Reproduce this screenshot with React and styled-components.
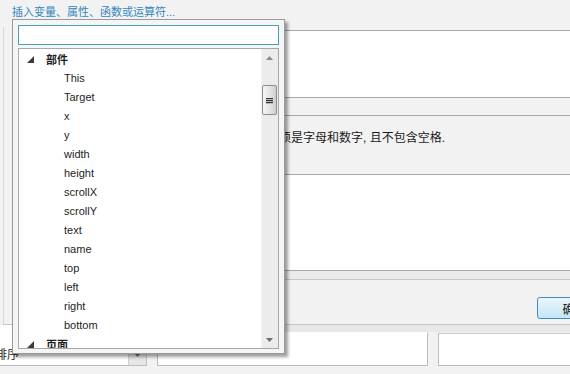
import React from 'react';
import styled, { createGlobalStyle } from 'styled-components';

const GlobalStyle = createGlobalStyle`
    html, body {
        margin: 0;
        padding: 0;
        background: #f2f2f2;
    }
    body {
        font-family: "Liberation Sans", "Noto Sans CJK SC", sans-serif;
    }
`;

const cjk = `"Liberation Sans", "Noto Sans CJK SC", sans-serif`;

const Screen = styled.div`
    position: relative;
    width: 570px;
    height: 374px;
    overflow: hidden;
    background: #f2f2f2;
    display: flex;
    flex-direction: column;
`;

const LinkBar = styled.div`
    height: 27px;
    box-sizing: border-box;
    padding: 5px 0 0 12px;
    font-family: ${cjk};
    font-size: 11px;
    line-height: 14px;
    color: #3388bf;
`;

const MainPanel = styled.div`
    margin-left: 3px;
    height: 298px;
    box-sizing: border-box;
    padding: 3px 0 0 10px;
    border-left: 1px solid #d8d8d8;
    border-bottom: 1px solid #c6c6c6;
    display: flex;
    flex-direction: column;
`;

const WhiteBox = styled.div`
    height: ${(p) => p.$h}px;
    box-sizing: border-box;
    background: #fff;
    border-top: 1px solid #a8a8a8;
    border-bottom: 1px solid #a8a8a8;
    margin-bottom: ${(p) => p.$gap || 0}px;
`;

const HintGroup = styled.div`
    height: 59px;
    box-sizing: border-box;
    border-top: 1px solid #a8a8a8;
    padding: 14px 0 0 229px;
    font-family: ${cjk};
    font-size: 12px;
    line-height: 16px;
    color: #1a1a1a;
    white-space: nowrap;
`;

const Divider = styled.div`
    height: 8px;
    background: #ebebeb;
`;

const Footer = styled.div`
    flex: 1;
    border-top: 1px solid #c8c8c8;
    display: flex;
    justify-content: flex-end;
    align-items: flex-start;
    padding-top: 17px;
`;

const PrimaryButton = styled.button`
    width: 75px;
    height: 22px;
    margin-right: -42px;
    border: 1px solid #3f8fbf;
    border-radius: 3px;
    background: linear-gradient(#eaf6fd, #c4e5f7);
    font-family: ${cjk};
    font-size: 12px;
    color: #111;
    padding: 0;
`;

const BottomRow = styled.div`
    height: 41px;
    display: flex;
    gap: 10px;
    background: linear-gradient(#e8e8e8 0 7px, #f2f2f2 7px);
`;

const ComboCell = styled.div`
    width: 147px;
    box-sizing: border-box;
    background: #fff;
    border-right: 1px solid #c4c4c4;
    border-bottom: 1px solid #bdbdbd;
    display: flex;
    align-items: flex-end;
`;

const ComboLabel = styled.div`
    flex: 1;
    margin-left: -5px;
    height: 20px;
    font-family: ${cjk};
    font-size: 12px;
    line-height: 20px;
    color: #1a1a1a;
`;

const ComboArrow = styled.div`
    width: 17px;
    height: 20px;
    background: #e6e6e6;
    border-left: 1px solid #d0d0d0;
    display: flex;
    align-items: center;
    justify-content: center;
`;

const ListCell = styled.div`
    width: ${(p) => p.$w}px;
    flex: ${(p) => (p.$w ? 'none' : 1)};
    box-sizing: border-box;
    margin-top: ${(p) => p.$top}px;
    background: #fff;
    border: 1px solid #bdbdbd;
    border-top-color: ${(p) => p.$topColor || '#fff'};
    border-right-width: ${(p) => (p.$w ? 1 : 0)}px;
`;

/* popup */

const Popup = styled.div`
    position: absolute;
    left: 12px;
    top: 19px;
    width: 273px;
    height: 335px;
    box-sizing: border-box;
    background: #f5f5f5;
    border: 1px solid #9a9a9a;
    box-shadow: 3px 3px 3px rgba(0, 0, 0, 0.38);
    padding: 5px 5px 4px 5px;
    display: flex;
    flex-direction: column;
    gap: 3px;
`;

const SearchInput = styled.input`
    height: 20px;
    box-sizing: border-box;
    border: 1px solid #46a2ba;
    background: #fff;
    outline: none;
    padding: 0 4px;
    font-size: 11px;
`;

const ListBox = styled.div`
    flex: 1;
    min-height: 0;
    border: 1px solid #a8a8a8;
    background: #fff;
    display: flex;
    overflow: hidden;
`;

const Tree = styled.div`
    flex: 1;
    overflow: hidden;
`;

const TreeRow = styled.div`
    height: 19px;
    display: flex;
    align-items: center;
    padding-left: ${(p) => (p.$group ? 8 : 45)}px;
    font-family: ${cjk};
    font-size: 11px;
    font-weight: ${(p) => (p.$group ? 700 : 400)};
    color: #1e1e1e;
    white-space: nowrap;
`;

const Expander = styled.svg`
    width: 7px;
    height: 7px;
    margin-right: 12px;
    margin-top: 1px;
`;

const ScrollTrack = styled.div`
    width: 16px;
    background: #ececec;
    border-left: 1px solid #f4f4f4;
    display: flex;
    flex-direction: column;
    align-items: flex-start;
`;

const ScrollArrow = styled.div`
    height: 17px;
    width: 15px;
    display: flex;
    align-items: center;
    justify-content: center;
`;

const Thumb = styled.div`
    width: 15px;
    height: 30px;
    box-sizing: border-box;
    border: 1px solid #8e8e8e;
    border-radius: 2px;
    background: linear-gradient(90deg, #f6f6f6, #e2e2e2 60%, #cdcdcd);
    display: flex;
    flex-direction: column;
    align-items: center;
    justify-content: center;
    gap: 1px;
`;

const Grip = styled.span`
    display: block;
    width: 7px;
    height: 1px;
    background: #333;
    box-shadow: 0 1px 0 #bbb;
`;

const Spacer = styled.div`
    flex: 1;
`;

const groups = [
    {
        label: '部件',
        items: ['This', 'Target', 'x', 'y', 'width', 'height', 'scrollX', 'scrollY', 'text', 'name', 'top', 'left', 'right', 'bottom'],
    },
    { label: '页面', items: [] },
];

const Triangle = ({ up }) => (
    <svg width="7" height="4" viewBox="0 0 7 4">
        <polygon points={up ? '3.5,0 7,4 0,4' : '0,0 7,0 3.5,4'} fill={up ? '#8a8a8a' : '#6e6e6e'} />
    </svg>
);

const App = () => {
    const thumbOffset = 19;

    return (
        <>
            <GlobalStyle />
            <Screen>
                <LinkBar>插入变量、属性、函数或运算符...</LinkBar>

                <MainPanel>
                    <WhiteBox $h={68} $gap={17} />
                    <HintGroup>名称必须是字母和数字, 且不包含空格.</HintGroup>
                    <WhiteBox $h={97} />
                    <Divider />
                    <Footer>
                        <PrimaryButton>确定</PrimaryButton>
                    </Footer>
                </MainPanel>

                <BottomRow>
                    <ComboCell>
                        <ComboLabel>排序</ComboLabel>
                        <ComboArrow>
                            <Triangle />
                        </ComboArrow>
                    </ComboCell>
                    <ListCell $w={271} $top={7} />
                    <ListCell $top={8} $topColor="#c8c8c8" />
                </BottomRow>

                {/* insert popup */}
                <Popup>
                    <SearchInput />
                    <ListBox>
                        <Tree>
                            {groups.map((g) => (
                                <React.Fragment key={g.label}>
                                    <TreeRow $group>
                                        <Expander viewBox="0 0 7 7">
                                            <polygon points="7,0 7,7 0,7" fill="#3c3c3c" />
                                        </Expander>
                                        {g.label}
                                    </TreeRow>
                                    {g.items.map((item) => (
                                        <TreeRow key={item}>{item}</TreeRow>
                                    ))}
                                </React.Fragment>
                            ))}
                        </Tree>
                        <ScrollTrack>
                            <ScrollArrow>
                                <Triangle up />
                            </ScrollArrow>
                            <Thumb style={{ marginTop: thumbOffset }}>
                                <Grip />
                                <Grip />
                                <Grip />
                            </Thumb>
                            <Spacer />
                            <ScrollArrow>
                                <Triangle />
                            </ScrollArrow>
                        </ScrollTrack>
                    </ListBox>
                </Popup>
            </Screen>
        </>
    );
};

export default App;
